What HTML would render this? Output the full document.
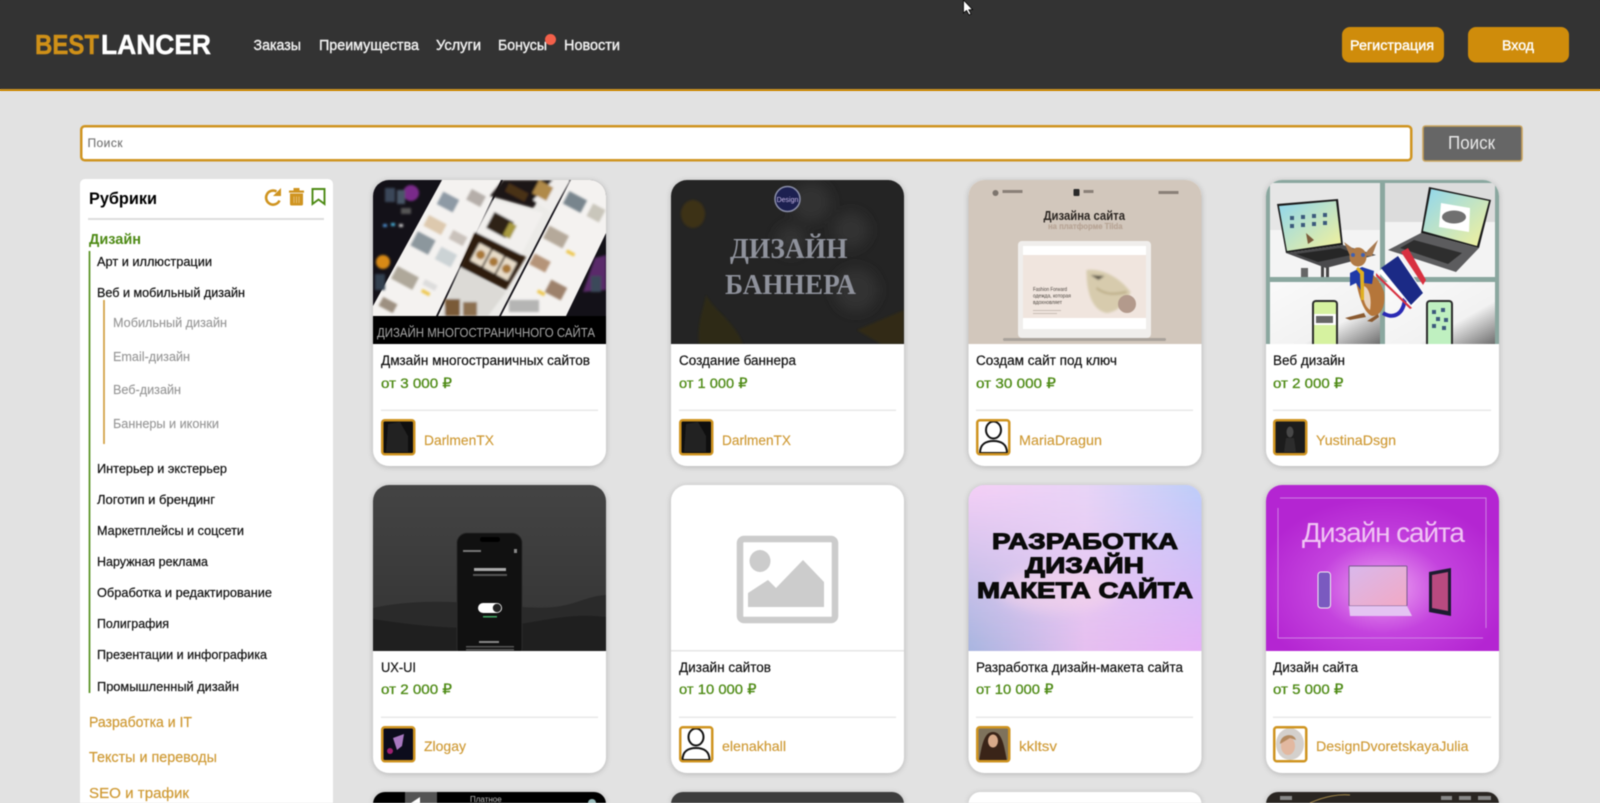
<!DOCTYPE html>
<html lang="ru"><head><meta charset="utf-8"><title>BestLancer</title>
<style>
html,body{margin:0;padding:0;width:1600px;height:803px;overflow:hidden}
html,body{background:linear-gradient(#333 0,#333 89px,#cf9420 89px,#cf9420 91px,#e2e2e2 91px,#e2e2e2 100%)}
svg{display:block;filter:blur(.4px)}
text{font-family:"Liberation Sans","DejaVu Sans",sans-serif}
.nav{font-size:14.5px;fill:#f0f0f0;stroke:#f0f0f0;stroke-width:.4}
.btn{font-size:14px;fill:#fff;stroke:#fff;stroke-width:.4}
.it{font-size:13px;fill:#111;stroke:#111;stroke-width:.22}
.sub{font-size:13px;fill:#999;stroke:#999;stroke-width:.15}
.cat{font-size:14.5px;fill:#cf9a35;stroke:#cf9a35;stroke-width:.2}
.t{font-size:13.5px;fill:#111;stroke:#111;stroke-width:.2}
.p{font-size:14px;fill:#4d8a14;stroke:#4d8a14;stroke-width:.3}
.n{font-size:14px;fill:#cf9a35;stroke:#cf9a35;stroke-width:.15}
</style></head><body>
<svg width="1600" height="803" viewBox="0 0 1600 803" xmlns="http://www.w3.org/2000/svg">
<defs>
<filter id="sh" x="-10%" y="-10%" width="120%" height="120%"><feDropShadow dx="0" dy="1" stdDeviation="3" flood-color="#000" flood-opacity=".2"/></filter>
<filter id="b1" x="-20%" y="-20%" width="140%" height="140%"><feGaussianBlur stdDeviation="1"/></filter>
<filter id="b6" x="-50%" y="-50%" width="200%" height="200%"><feGaussianBlur stdDeviation="6"/></filter>
<clipPath id="c1"><path d="M0 164V16A16 16 0 0 1 16 0H217A16 16 0 0 1 233 16V164Z"/></clipPath>
<clipPath id="c2"><path d="M0 166V16A16 16 0 0 1 16 0H217A16 16 0 0 1 233 16V166Z"/></clipPath>
<linearGradient id="lap" x1="0" y1="0" x2="1" y2="1"><stop offset="0" stop-color="#8fd6ee"/><stop offset="1" stop-color="#f5f29a"/></linearGradient>
<linearGradient id="pan2" x1="0" y1="0" x2="1" y2="1"><stop offset="0" stop-color="#fafafa"/><stop offset=".65" stop-color="#f2f2f2"/><stop offset="1" stop-color="#6e6e6e"/></linearGradient>
<linearGradient id="ux" x1="0" y1="0" x2="0" y2="1"><stop offset="0" stop-color="#444"/><stop offset="1" stop-color="#333"/></linearGradient>
<linearGradient id="g1" x1="0" y1="0" x2="1" y2="0"><stop offset="0" stop-color="#f5cff6"/><stop offset=".5" stop-color="#e8d4f6"/><stop offset="1" stop-color="#bccdf9"/></linearGradient>
<linearGradient id="g2" x1="0" y1="0" x2="1" y2="0"><stop offset="0" stop-color="#a8b6e0"/><stop offset=".5" stop-color="#e6c0f0"/><stop offset="1" stop-color="#e6b2f7"/></linearGradient>
<linearGradient id="gv" x1="0" y1="0" x2="0" y2="1"><stop offset="0" stop-color="#fff"/><stop offset="1" stop-color="#000"/></linearGradient>
<mask id="mv"><rect width="233" height="166" fill="url(#gv)"/></mask>
<radialGradient id="pur" cx=".5" cy=".62" r=".55"><stop offset="0" stop-color="#f0a8f4"/><stop offset=".5" stop-color="#c443de"/><stop offset="1" stop-color="#b425d2"/></radialGradient>
<linearGradient id="scr" x1="0" y1="0" x2="1" y2="1"><stop offset="0" stop-color="#d9b8ec"/><stop offset="1" stop-color="#f2a9c4"/></linearGradient>
</defs>

<!-- header -->
<rect width="1600" height="89" fill="#333"/>
<rect y="89" width="1600" height="2" fill="#cf9420"/>
<text x="35" y="54" font-size="28" font-weight="700" fill="#cf9018" stroke="#cf9018" stroke-width=".5" textLength="64" lengthAdjust="spacingAndGlyphs">BEST</text>
<text x="101" y="54" font-size="28" font-weight="700" fill="#fff" stroke="#fff" stroke-width=".5" textLength="110" lengthAdjust="spacingAndGlyphs">LANCER</text>
<text class="nav" x="253.500" y="50" textLength="47.500" lengthAdjust="spacingAndGlyphs">Заказы</text>
<text class="nav" x="319" y="50" textLength="100" lengthAdjust="spacingAndGlyphs">Преимущества</text>
<text class="nav" x="436" y="50" textLength="45" lengthAdjust="spacingAndGlyphs">Услуги</text>
<text class="nav" x="498" y="50" textLength="49" lengthAdjust="spacingAndGlyphs">Бонусы</text>
<circle cx="550.500" cy="39.500" r="5.500" fill="#f4604a"/>
<text class="nav" x="564" y="50" textLength="56" lengthAdjust="spacingAndGlyphs">Новости</text>
<rect x="1342" y="27" width="102" height="35.500" rx="8" fill="#cf8c0b"/>
<rect x="1468" y="27" width="101" height="35.500" rx="8" fill="#cf8c0b"/>
<text class="btn" x="1350" y="50" textLength="84" lengthAdjust="spacingAndGlyphs">Регистрация</text>
<text class="btn" x="1502" y="50" textLength="32" lengthAdjust="spacingAndGlyphs">Вход</text>
<path d="M963.500 0L963.500 13L966.500 10.500L969 15L971 14L968.800 9.800L972.500 9.500Z" fill="#fff" stroke="#000" stroke-width=".8"/>

<!-- search -->
<rect x="81.250" y="126.250" width="1330" height="34" rx="3.500" fill="#fff" stroke="#cf9420" stroke-width="2.500"/>
<text x="87.500" y="147" font-size="12" fill="#777" stroke="#777" stroke-width=".15" textLength="35" lengthAdjust="spacing">Поиск</text>
<rect x="1423" y="126" width="99" height="35" rx="2.500" fill="#666" stroke="#c9a35b" stroke-width="1.600"/>
<text x="1448" y="149" font-size="18" fill="#e8e8e8" textLength="47" lengthAdjust="spacingAndGlyphs">Поиск</text>

<!-- sidebar -->
<path d="M80 803V184A5 5 0 0 1 85 179H328A5 5 0 0 1 333 184V803Z" fill="#fff"/>
<text x="89" y="204" font-size="16.500" font-weight="700" fill="#000" textLength="68" lengthAdjust="spacingAndGlyphs">Рубрики</text>
<path d="M279.500 200.500A7 7 0 1 1 276.500 191.500" fill="none" stroke="#cf9420" stroke-width="2.600"/>
<path d="M281 188V196H273Z" fill="#cf9420"/>
<path d="M289 190.500H304V192.800H289ZM293.500 188H299.500V190.500H293.500Z" fill="#cf9420"/>
<path d="M290 193.500H303V204A1.500 1.500 0 0 1 301.500 205.500H291.500A1.500 1.500 0 0 1 290 204Z" fill="#cf9420"/>
<path d="M294 196.500V203M296.500 196.500V203M299 196.500V203" stroke="#f0d8a8" stroke-width=".6"/>
<path d="M312.500 189H324.500V204L318.500 199.500L312.500 204Z" fill="none" stroke="#4d8a14" stroke-width="1.900"/>
<rect x="88" y="218" width="236" height="2" fill="#ddd"/>
<text x="89" y="244" font-size="14.500" font-weight="700" fill="#4d8a14" textLength="52" lengthAdjust="spacingAndGlyphs">Дизайн</text>
<rect x="88.700" y="251" width="1.600" height="442" fill="#4d8a14"/>
<text class="it" x="97" y="266" textLength="115" lengthAdjust="spacingAndGlyphs">Арт и иллюстрации</text>
<text class="it" x="97" y="297" textLength="148" lengthAdjust="spacingAndGlyphs">Веб и мобильный дизайн</text>
<rect x="103.200" y="300" width="1.600" height="144" fill="#cf9a35"/>
<text class="sub" x="113" y="327" textLength="114" lengthAdjust="spacingAndGlyphs">Мобильный дизайн</text>
<text class="sub" x="113" y="361" textLength="77" lengthAdjust="spacingAndGlyphs">Email-дизайн</text>
<text class="sub" x="113" y="394" textLength="68" lengthAdjust="spacingAndGlyphs">Веб-дизайн</text>
<text class="sub" x="113" y="428" textLength="106" lengthAdjust="spacingAndGlyphs">Баннеры и иконки</text>
<text class="it" x="97" y="473" textLength="130" lengthAdjust="spacingAndGlyphs">Интерьер и экстерьер</text>
<text class="it" x="97" y="504" textLength="118" lengthAdjust="spacingAndGlyphs">Логотип и брендинг</text>
<text class="it" x="97" y="535" textLength="147" lengthAdjust="spacingAndGlyphs">Маркетплейсы и соцсети</text>
<text class="it" x="97" y="566" textLength="111" lengthAdjust="spacingAndGlyphs">Наружная реклама</text>
<text class="it" x="97" y="597" textLength="175" lengthAdjust="spacingAndGlyphs">Обработка и редактирование</text>
<text class="it" x="97" y="628" textLength="72" lengthAdjust="spacingAndGlyphs">Полиграфия</text>
<text class="it" x="97" y="659" textLength="170" lengthAdjust="spacingAndGlyphs">Презентации и инфографика</text>
<text class="it" x="97" y="691" textLength="142" lengthAdjust="spacingAndGlyphs">Промышленный дизайн</text>
<text class="cat" x="89" y="727" textLength="103" lengthAdjust="spacingAndGlyphs">Разработка и IT</text>
<text class="cat" x="89" y="762" textLength="128" lengthAdjust="spacingAndGlyphs">Тексты и переводы</text>
<text class="cat" x="89" y="798" textLength="100" lengthAdjust="spacingAndGlyphs">SEO и трафик</text>

<!-- card bodies -->
<g filter="url(#sh)" fill="#fff">
<rect x="373" y="180" width="233" height="286" rx="16"/>
<rect x="671" y="180" width="233" height="286" rx="16"/>
<rect x="968.500" y="180" width="233" height="286" rx="16"/>
<rect x="1266" y="180" width="233" height="286" rx="16"/>
<rect x="373" y="485" width="233" height="288" rx="16"/>
<rect x="671" y="485" width="233" height="288" rx="16"/>
<rect x="968.500" y="485" width="233" height="288" rx="16"/>
<rect x="1266" y="485" width="233" height="288" rx="16"/>
<path d="M373 803V804A12 12 0 0 1 385 792H594A12 12 0 0 1 606 804V803Z" fill="#000"/>
<path d="M671 803V804A12 12 0 0 1 683 792H892A12 12 0 0 1 904 804V803Z" fill="#3c3c3c"/>
<path d="M968.500 803V804A12 12 0 0 1 980.500 792H1189.500A12 12 0 0 1 1201.500 804V803Z"/>
<path d="M1266 803V804A12 12 0 0 1 1278 792H1487A12 12 0 0 1 1499 804V803Z" fill="#2a2622"/>
</g>

<!-- image 1 -->
<g transform="translate(373 180)"><g clip-path="url(#c1)">
<rect width="233" height="164" fill="#131118"/>
<path d="M69 0H128L63 136H0L0 126Z" fill="#f4f2f0"/>
<path d="M130 0H196L126 136H65Z" fill="#ecebe8"/>
<path d="M198 0H233V53L193 136H128Z" fill="#f4f2f0"/>
<g filter="url(#b1)">
<g opacity=".82">
<rect x="66" y="15" width="18" height="14" transform="rotate(28 75 22)" fill="#788794"/>
<rect x="95" y="12" width="16" height="12" transform="rotate(28 103 18)" fill="#a8a09a"/>
<rect x="52" y="39" width="20" height="12" transform="rotate(28 62 45)" fill="#d8c0a0"/>
<rect x="77" y="53" width="16" height="10" transform="rotate(28 85 58)" fill="#c0b8b0"/>
<rect x="40" y="55" width="20" height="16" transform="rotate(28 50 63)" fill="#76838c"/>
<rect x="64" y="70" width="18" height="14" transform="rotate(28 73 77)" fill="#c4ccd0"/>
<rect x="20" y="91" width="24" height="14" transform="rotate(28 32 98)" fill="#a09888"/>
<rect x="7" y="120" width="16" height="10" transform="rotate(28 15 125)" fill="#8a7a68"/>
<rect x="50" y="102" width="14" height="6" transform="rotate(28 57 105)" fill="#d8d8d8"/>
<rect x="192" y="15" width="20" height="14" transform="rotate(28 202 22)" fill="#5e6e78"/>
<rect x="216" y="26" width="14" height="14" transform="rotate(28 223 33)" fill="#c0bcb0"/>
<rect x="172" y="50" width="22" height="14" transform="rotate(28 183 57)" fill="#a89a88"/>
<rect x="158" y="77" width="18" height="12" transform="rotate(28 167 83)" fill="#a88060"/>
<rect x="174" y="103" width="18" height="14" transform="rotate(28 183 110)" fill="#8a6a50"/>
<rect x="136" y="120" width="30" height="12" fill="#a8a8a8"/>
</g>
<rect x="48" y="111" width="9" height="3.500" transform="rotate(28 53 113)" fill="#eec850"/>
<path d="M130 0H180L160 28L117 16Z" fill="#1c1612"/>
<rect x="133" y="8" width="22" height="9" transform="rotate(28 144 12)" fill="#4a3018"/>
<rect x="164" y="12" width="8" height="4" fill="#c87818"/>
<path d="M180 0H198L178 32L160 20Z" fill="#f0eeec"/>
<rect x="162" y="3" width="16" height="15" transform="rotate(28 170 10)" fill="#b08a48"/>
<path d="M120 20L170 33L148 75L102 52Z" fill="#f2f0ee"/>
<rect x="116" y="36" width="22" height="18" transform="rotate(28 127 45)" fill="#2e2216"/>
<rect x="133" y="43" width="8" height="15" transform="rotate(28 137 50)" fill="#a89a40"/>
<path d="M102 52L153 77L133 110L87 87Z" fill="#2e1e10"/>
<g transform="rotate(28 108 75)"><rect x="101" y="65" width="13" height="20" fill="#e8dcc8"/><circle cx="107.500" cy="75" r="4.500" fill="#a87838"/></g>
<g transform="rotate(28 121 82)"><rect x="114" y="72" width="13" height="20" fill="#e8dcc8"/><circle cx="120.500" cy="82" r="4.500" fill="#a87838"/></g>
<g transform="rotate(28 134 89)"><rect x="127" y="79" width="13" height="20" fill="#e8dcc8"/><circle cx="133.500" cy="89" r="4.500" fill="#a87838"/></g>
<path d="M87 87L133 112L115 136H68Z" fill="#dcdad6"/>
<rect x="72" y="119" width="15" height="17" fill="#7a5a38"/><rect x="90" y="122" width="14" height="14" fill="#8c7050"/>
<rect x="193" y="71" width="9" height="3.500" transform="rotate(28 197 73)" fill="#eec850"/>
<rect x="164" y="111" width="8" height="3.500" transform="rotate(28 168 113)" fill="#eec850"/>
<circle cx="38" cy="13" r="8" fill="#7a2a8a"/><rect x="12" y="8" width="10" height="14" fill="#3a4658"/><rect x="24" y="10" width="8" height="14" fill="#4a5668"/>
<rect x="10" y="44" width="4" height="3" fill="#4a8ac8"/><rect x="18" y="43" width="4" height="3" fill="#4ab0d8"/><rect x="26" y="44" width="4" height="3" fill="#ccc"/>
<circle cx="10" cy="82" r="7" fill="#d88a18"/><rect x="28" y="28" width="10" height="6" fill="#555"/>
<rect x="2" y="94" width="10" height="16" fill="#33404f"/>
<path d="M222 78L233 75V110L210 112Z" fill="#5a2a6a"/><rect x="218" y="96" width="10" height="16" fill="#3a4a5a"/>
</g>
<rect y="136" width="233" height="28" fill="#000"/>
<text x="4" y="157" font-size="13" fill="#a6a6a6" textLength="218" lengthAdjust="spacingAndGlyphs">ДИЗАЙН МНОГОСТРАНИЧНОГО САЙТА</text>
</g></g>

<!-- image 2 -->
<g transform="translate(671 180)"><g clip-path="url(#c1)">
<rect width="233" height="164" fill="#242424"/>
<g filter="url(#b6)" fill="#333"><circle cx="140" cy="22" r="20"/><circle cx="180" cy="50" r="18"/><circle cx="185" cy="110" r="22"/><circle cx="120" cy="60" r="15"/></g>
<g filter="url(#b1)"><ellipse cx="22" cy="34" rx="12" ry="14" fill="#3e3218"/>
<path d="M28 164C26 140 34 125 35 115C42 130 62 140 72 164Z" fill="#2e2a16"/>
<path d="M186 150L233 130V164H210Z" fill="#302a14"/></g>
<circle cx="116.500" cy="19" r="12.500" fill="#1c2050" stroke="#8a8ea8" stroke-width="1.500"/>
<text x="116.500" y="22" font-size="7" fill="#c8b8e8" text-anchor="middle">Design</text>
<text x="59" y="78" font-size="29" font-weight="700" fill="#8f929c" style="font-family:'Liberation Serif',serif" textLength="117.500" lengthAdjust="spacingAndGlyphs">ДИЗАЙН</text>
<text x="54" y="114" font-size="29" font-weight="700" fill="#8f929c" style="font-family:'Liberation Serif',serif" textLength="131" lengthAdjust="spacingAndGlyphs">БАННЕРА</text>
</g></g>

<!-- image 3 -->
<g transform="translate(968.500 180)"><g clip-path="url(#c1)">
<rect width="233" height="164" fill="#d2c7bc"/>
<circle cx="27" cy="13" r="3" fill="#7d756e"/><rect x="34" y="10" width="20" height="3" fill="#8a8078"/>
<rect x="105" y="9" width="6" height="7" rx="1" fill="#2a2a2a"/><rect x="115" y="10" width="10" height="3" fill="#8a8078"/>
<rect x="190" y="11" width="20" height="3" fill="#8a8078"/>
<text x="75" y="40" font-size="12.500" font-weight="700" fill="#2b2622" textLength="81.500" lengthAdjust="spacingAndGlyphs">Дизайна сайта</text>
<text x="79.500" y="49" font-size="8.500" font-weight="700" fill="#b8a596" stroke="#b8a596" stroke-width=".2" textLength="74.500" lengthAdjust="spacingAndGlyphs">на платформе Tilda</text>
<rect x="49.500" y="61" width="133" height="97" rx="4" fill="#f0eeec"/>
<rect x="54.500" y="66" width="123" height="9" fill="#fff"/>
<rect x="54.500" y="75" width="123" height="63" fill="#f0e5de"/>
<rect x="54.500" y="138" width="123" height="11" fill="#fff"/>
<rect x="34.500" y="158" width="163" height="3" rx="1.500" fill="#a9a29b"/>
<g filter="url(#b1)" opacity=".95">
<path d="M118 90C132 88 150 96 162 112C158 124 148 132 138 133C124 130 118 114 118 90Z" fill="#d6caab"/>
<path d="M122 95L136 96L130 100Z" fill="#55503f"/>
<path d="M128 108C138 116 148 114 158 112" fill="none" stroke="#b8a880" stroke-width="2"/>
</g>
<circle cx="158.500" cy="124" r="9" fill="#b39a8c"/>
<text x="64.500" y="111" font-size="5.800" fill="#4a443e" textLength="34" lengthAdjust="spacingAndGlyphs">Fashion Forward</text>
<text x="64.500" y="117.500" font-size="5.800" fill="#4a443e" textLength="38" lengthAdjust="spacingAndGlyphs">одежда, которая</text>
<text x="64.500" y="124" font-size="5.800" fill="#4a443e" textLength="29" lengthAdjust="spacingAndGlyphs">вдохновляет</text>
<rect x="64.500" y="130" width="28" height="1" fill="#c8bdb5"/><rect x="64.500" y="133" width="24" height="1" fill="#c8bdb5"/>
</g></g>

<!-- image 4 -->
<g transform="translate(1266 180)"><g clip-path="url(#c1)">
<rect width="233" height="164" fill="#8aa79f"/>
<rect x="4" y="3" width="110" height="94" fill="#e6e6e6"/>
<rect x="4" y="50" width="110" height="47" fill="#f4f4f4"/>
<rect x="119" y="3" width="110" height="94" fill="#dcdcdc"/>
<rect x="119" y="42" width="110" height="55" fill="#f3f3f3"/>
<rect x="4" y="102" width="110" height="62" fill="url(#pan2)"/>
<rect x="119" y="102" width="110" height="62" fill="url(#pan2)"/>
<rect x="35" y="88" width="7" height="9" fill="#666"/><rect x="55" y="85" width="3" height="12" fill="#444"/><rect x="60" y="85" width="3" height="12" fill="#444"/>
<path d="M11 24L72 19L77 65L20 73Z" fill="#1a1a1a"/><path d="M13 26L70 21L75 63L21 71Z" fill="url(#lap)"/>
<g fill="#3c5a7c"><rect x="24" y="36" width="4" height="4"/><rect x="35" y="35" width="4" height="4"/><rect x="46" y="34" width="4" height="4"/><rect x="57" y="33" width="4" height="4"/><rect x="24" y="44" width="4" height="4"/><rect x="35" y="43" width="4" height="4"/><rect x="46" y="42" width="4" height="4"/><rect x="57" y="41" width="4" height="4"/></g>
<path d="M40 53L48 60L42 64Z" fill="#7b5a3a"/>
<path d="M20 73L77 65L110 75L60 88Z" fill="#4a4a4c"/><path d="M30 74L74 68L90 74L52 82Z" fill="#262626"/>
<path d="M163 7L225 20L213 68L155 53Z" fill="#1a1a1a"/><path d="M165 9L223 21L211 66L157 51Z" fill="url(#lap)"/>
<path d="M175 23L204 28L203 52L173 47Z" fill="#fff"/><ellipse cx="188" cy="37" rx="12" ry="6.500" fill="#707070"/>
<path d="M155 53L213 68L190 92L122 70Z" fill="#5c5c5e"/><path d="M148 60L196 73L182 84L134 68Z" fill="#2e2e2e"/>
<rect x="46" y="120" width="26" height="50" rx="4" fill="#2a2a2a"/><rect x="48" y="122" width="22" height="44" rx="2" fill="#d6f2a0"/><rect x="48" y="134" width="22" height="11" fill="#fff"/><rect x="50" y="136" width="17" height="7" fill="#666"/>
<rect x="160" y="120" width="27" height="50" rx="4" fill="#2a2a2a"/><rect x="162" y="122" width="23" height="44" rx="2" fill="#bff0c0"/>
<g fill="#3c5a7c"><rect x="166" y="130" width="4" height="4"/><rect x="175" y="128" width="4" height="4"/><rect x="170" y="137" width="4" height="4"/><rect x="178" y="138" width="4" height="4"/><rect x="166" y="144" width="4" height="4"/><rect x="176" y="146" width="4" height="4"/></g>
<path d="M117 133C126 139 138 136 139 117" fill="none" stroke="#2a2ab4" stroke-width="4"/>
<path d="M88 92C98 86 112 94 118 112C120 128 114 136 106 136C96 132 92 112 88 92Z" fill="#b5763a"/>
<path d="M98 106C103 108 106 118 104 130C98 126 96 116 98 106Z" fill="#e8d4c0"/>
<path d="M78 62L89 70L92 76L84 76ZM112 60L102 70L98 76L106 76Z" fill="#a87a50"/>
<ellipse cx="92" cy="77" rx="8.500" ry="9.500" fill="#b07a45"/>
<circle cx="87" cy="75" r="2" fill="#4060b0"/><circle cx="97" cy="75" r="2" fill="#4060b0"/>
<path d="M84 93L96 87L108 91L106 104L98 103L96 112L90 103L84 106Z" fill="#1f3aa8"/>
<path d="M92 87L98 92L98 120L95 120L94 94L90 89Z" fill="#e0b020"/>
<path d="M79 138L98 133L100 137L84 140ZM101 141L112 134L113 137L106 142Z" fill="#8a5a30"/>
<path d="M112 92L133 75L158 113L146 127Z" fill="#fff"/>
<path d="M115 88L132 76L157 113L145 125Z" fill="#1b2a86"/>
<path d="M135 72L142 68L160 100L157 105Z" fill="#d83040"/>
<path d="M110 93L146 128L144 129L110 96Z" fill="#d83040"/>
</g></g>

<!-- image 5 -->
<g transform="translate(373 485)"><g clip-path="url(#c2)">
<rect width="233" height="166" fill="url(#ux)"/>
<path d="M0 123C50 112 100 118 150 122S205 112 233 110V166H0Z" fill="#2a2a2a"/>
<path d="M0 134C50 142 100 146 140 140S200 128 233 132V166H0Z" fill="#1f1f1f"/>
<rect x="84" y="48" width="65" height="125" rx="10" fill="#111" stroke="#2a2a2a"/>
<rect x="107" y="52" width="20" height="5" rx="2.500" fill="#000"/>
<rect x="90" y="65" width="18" height="2" fill="#777"/><rect x="141" y="64" width="3" height="4" fill="#888"/>
<rect x="101" y="83" width="32" height="3" fill="#aaa"/><rect x="100" y="89" width="34" height="2" fill="#555"/>
<rect x="105" y="118" width="24" height="10" rx="5" fill="#fff"/><circle cx="124" cy="123" r="4.200" fill="#222"/>
<rect x="110" y="131" width="14" height="1.500" fill="#4a6"/>
<rect x="106" y="156" width="20" height="2" fill="#888"/><rect x="93" y="161" width="48" height="1.500" fill="#555"/><rect x="93" y="164" width="48" height="1.500" fill="#555"/>
</g></g>

<!-- image 6 -->
<g transform="translate(671 485)">
<rect y="165" width="233" height="1.500" fill="#e6e6e6"/>
<rect x="69" y="54" width="95" height="81" rx="4" fill="none" stroke="#ccc" stroke-width="6.500"/>
<ellipse cx="89" cy="76" rx="10.500" ry="11" fill="#ccc"/>
<path d="M77 122V108L97 95L105 103L132 75L153 97V122Z" fill="#ccc"/>
</g>

<!-- image 7 -->
<g transform="translate(968.500 485)"><g clip-path="url(#c2)">
<rect width="233" height="166" fill="url(#g2)"/>
<rect width="233" height="166" fill="url(#g1)" mask="url(#mv)"/>
<ellipse cx="90" cy="105" rx="60" ry="22" fill="#f4d4ea" filter="url(#b6)" opacity=".6"/>
<g font-weight="700" fill="#0a0a0a" stroke="#0a0a0a" stroke-width="1">
<text x="23.500" y="64" font-size="22" textLength="186" lengthAdjust="spacingAndGlyphs">РАЗРАБОТКА</text>
<text x="56.500" y="88" font-size="22" textLength="119" lengthAdjust="spacingAndGlyphs">ДИЗАЙН</text>
<text x="8.500" y="113" font-size="22" textLength="216" lengthAdjust="spacingAndGlyphs">МАКЕТА САЙТА</text>
</g>
</g></g>

<!-- image 8 -->
<g transform="translate(1266 485)"><g clip-path="url(#c2)">
<rect width="233" height="166" fill="url(#pur)"/>
<path d="M14 13H220V143M12 23V153H217" fill="none" stroke="#d080e4" stroke-width="1"/>
<text x="36" y="57" font-size="28" fill="#f0c4f4" textLength="163" lengthAdjust="spacing">Дизайн сайта</text>
<rect x="83" y="81" width="58" height="40" rx="1" fill="url(#scr)" stroke="#7a5a90" stroke-width="1"/>
<path d="M83 121H141L146 131H84Z" fill="#e4c4f2"/>
<rect x="52" y="87" width="12.500" height="36" rx="3" fill="#7a5ac0" stroke="#eee" stroke-width="1"/>
<path d="M163 87L185 83V131L163 127Z" fill="#1c1c30"/><path d="M166 90L182 87V126L166 123Z" fill="#b84a80"/>
</g></g>

<!-- row 3 tops -->
<path d="M405 792H437V803H405Z" fill="#777" opacity=".7"/>
<path d="M411 803L420 797V803Z" fill="#fff"/>
<text x="470" y="802" font-size="8" fill="#bbb">Платное</text>
<path d="M588 803A4 4 0 0 1 596 803Z" fill="#9bb"/>
<path d="M1280 796H1292V800H1280ZM1441 796H1452V800H1441ZM1459 796H1471V800H1459ZM1478 796H1491V800H1478Z" fill="#888"/>
<path d="M1310 803C1325 796 1340 794 1350 795" fill="none" stroke="#a58a4a"/>

<!-- card text row 1 -->
<text class="t" x="381" y="365" textLength="209" lengthAdjust="spacingAndGlyphs">Дмзайн многостраничных сайтов</text>
<text class="p" x="381" y="388" textLength="71" lengthAdjust="spacingAndGlyphs">от 3 000 ₽</text>
<rect x="381" y="409.500" width="217" height="1.500" fill="#e8e8e8"/>
<text class="n" x="424" y="445" textLength="70" lengthAdjust="spacingAndGlyphs">DarlmenTX</text>

<text class="t" x="679" y="365" textLength="117" lengthAdjust="spacingAndGlyphs">Создание баннера</text>
<text class="p" x="679" y="388" textLength="68.500" lengthAdjust="spacingAndGlyphs">от 1 000 ₽</text>
<rect x="679" y="409.500" width="217" height="1.500" fill="#e8e8e8"/>
<text class="n" x="722" y="445" textLength="69" lengthAdjust="spacingAndGlyphs">DarlmenTX</text>

<text class="t" x="976" y="365" textLength="141" lengthAdjust="spacingAndGlyphs">Создам сайт под ключ</text>
<text class="p" x="976" y="388" textLength="80" lengthAdjust="spacingAndGlyphs">от 30 000 ₽</text>
<rect x="976" y="409.500" width="217" height="1.500" fill="#e8e8e8"/>
<text class="n" x="1019" y="445" textLength="83" lengthAdjust="spacingAndGlyphs">MariaDragun</text>

<text class="t" x="1273" y="365" textLength="72" lengthAdjust="spacingAndGlyphs">Веб дизайн</text>
<text class="p" x="1273" y="388" textLength="70.500" lengthAdjust="spacingAndGlyphs">от 2 000 ₽</text>
<rect x="1273" y="409.500" width="218" height="1.500" fill="#e8e8e8"/>
<text class="n" x="1316" y="445" textLength="80" lengthAdjust="spacingAndGlyphs">YustinaDsgn</text>

<!-- card text row 2 -->
<text class="t" x="381" y="672" textLength="35" lengthAdjust="spacingAndGlyphs">UX-UI</text>
<text class="p" x="381" y="694" textLength="71" lengthAdjust="spacingAndGlyphs">от 2 000 ₽</text>
<rect x="381" y="716.500" width="217" height="1.500" fill="#e8e8e8"/>
<text class="n" x="424" y="751" textLength="42" lengthAdjust="spacingAndGlyphs">Zlogay</text>

<text class="t" x="679" y="672" textLength="92" lengthAdjust="spacingAndGlyphs">Дизайн сайтов</text>
<text class="p" x="679" y="694" textLength="77.500" lengthAdjust="spacingAndGlyphs">от 10 000 ₽</text>
<rect x="679" y="716.500" width="217" height="1.500" fill="#e8e8e8"/>
<text class="n" x="722" y="751" textLength="64" lengthAdjust="spacingAndGlyphs">elenakhall</text>

<text class="t" x="976" y="672" textLength="207" lengthAdjust="spacingAndGlyphs">Разработка дизайн-макета сайта</text>
<text class="p" x="976" y="694" textLength="77.500" lengthAdjust="spacingAndGlyphs">от 10 000 ₽</text>
<rect x="976" y="716.500" width="217" height="1.500" fill="#e8e8e8"/>
<text class="n" x="1019" y="751" textLength="38" lengthAdjust="spacingAndGlyphs">kkltsv</text>

<text class="t" x="1273" y="672" textLength="85" lengthAdjust="spacingAndGlyphs">Дизайн сайта</text>
<text class="p" x="1273" y="694" textLength="70.500" lengthAdjust="spacingAndGlyphs">от 5 000 ₽</text>
<rect x="1273" y="716.500" width="218" height="1.500" fill="#e8e8e8"/>
<text class="n" x="1316" y="751" textLength="152.500" lengthAdjust="spacingAndGlyphs">DesignDvoretskayaJulia</text>

<!-- avatars -->
<g fill="#0f0f0f">
<rect x="382" y="420" width="32" height="34"/><rect x="680" y="420" width="32" height="34"/>
<rect x="1274" y="420" width="32" height="34" fill="#1c1c1c"/>
<rect x="382" y="727" width="32" height="34" fill="#0c0c1c"/>
<rect x="977" y="727" width="32" height="34" fill="#7e725c"/>
</g>
<rect x="977" y="420" width="32" height="34" fill="#fff"/>
<rect x="680" y="727" width="32" height="34" fill="#fff"/>
<rect x="1274" y="727" width="32" height="34" fill="#fff"/>
<path d="M388 424L400 422L408 436V452H386Z" fill="#222"/>
<path d="M686 424L698 422L706 436V452H684Z" fill="#222"/>
<ellipse cx="1290" cy="432" rx="3.500" ry="5.500" fill="#484848"/><path d="M1284 452L1286 438H1294L1296 452Z" fill="#2c2c2c"/>
<g fill="none" stroke="#111" stroke-width="2">
<ellipse cx="993.500" cy="430" rx="7.500" ry="8.500"/><path d="M980 453C980 444 986 441 993.500 441S1007 444 1007 453Z"/>
<ellipse cx="696" cy="737" rx="7.500" ry="8.500"/><path d="M682.500 760C682.500 751 688.500 748 696 748S709.500 751 709.500 760Z"/>
</g>
<path d="M393 738L404 734L402 746L397 750Z" fill="#a878c0"/>
<circle cx="390" cy="751" r="3" fill="#a02070"/>
<path d="M979 761C982 745 984 732 993 732S1004 745 1007 761Z" fill="#3a2418"/>
<ellipse cx="993" cy="741" rx="5" ry="6.500" fill="#d8aa8a"/>
<ellipse cx="1290" cy="744" rx="14" ry="16" fill="#d4d0cc"/>
<ellipse cx="1288" cy="746" rx="7" ry="9" fill="#e2b8a0"/>
<path d="M1280 744C1280 734 1294 732 1296 740L1290 738Z" fill="#b48a60"/>
<g fill="none" stroke="#cf9420" stroke-width="2.500">
<rect x="382.250" y="420.250" width="32" height="34" rx="2.500"/>
<rect x="680.250" y="420.250" width="32" height="34" rx="2.500"/>
<rect x="977.250" y="420.250" width="32" height="34" rx="2.500"/>
<rect x="1274.250" y="420.250" width="32" height="34" rx="2.500"/>
<rect x="382.250" y="727.250" width="32" height="34" rx="2.500"/>
<rect x="680.250" y="727.250" width="32" height="34" rx="2.500"/>
<rect x="977.250" y="727.250" width="32" height="34" rx="2.500"/>
<rect x="1274.250" y="727.250" width="32" height="34" rx="2.500"/>
</g>
</svg>
</body></html>
